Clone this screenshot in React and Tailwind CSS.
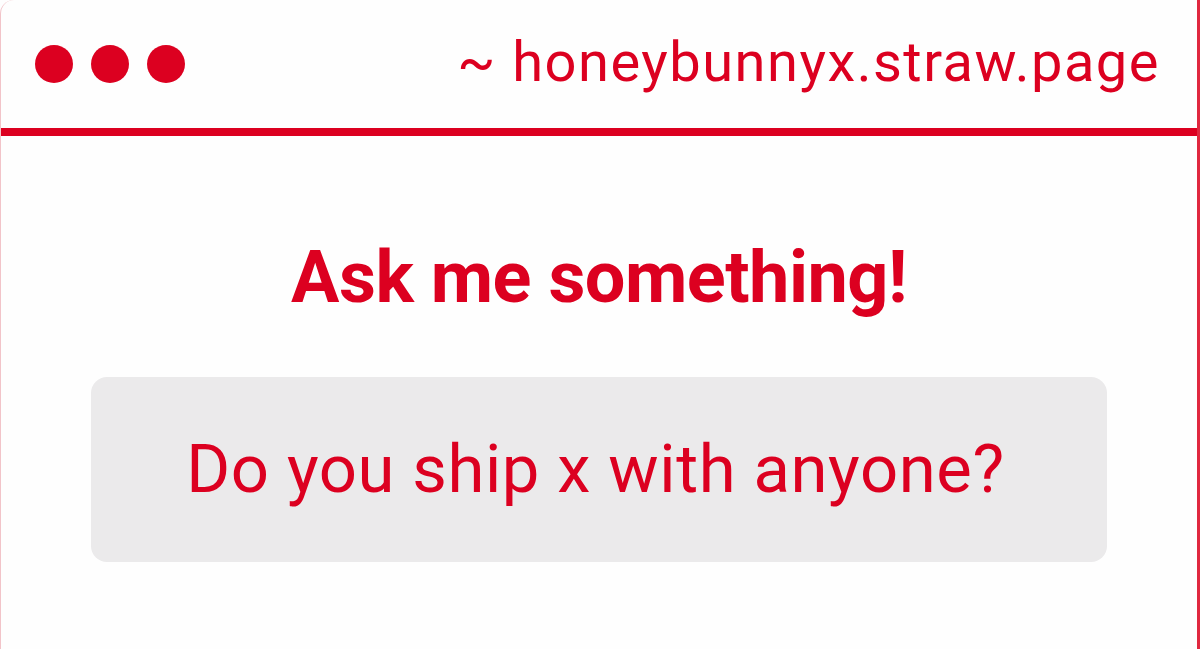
export default function App() {
  return (
    <div className="h-[649px] w-full overflow-hidden bg-[#fefefe] font-['Roboto',sans-serif] text-[#dc0020]">
      <div className="flex h-[680px] flex-col rounded-tl-[14px] border-l border-r-[3px] border-l-[#f2c4c9] border-r-[#e0283f] bg-[#fefefe]">
        <div className="flex h-[128px] items-center justify-between pl-[34px] pr-[37px]">
          <div className="flex items-center gap-[18px]">
            <span className="h-[38px] w-[38px] rounded-full bg-[#dc0020]" />
            <span className="h-[38px] w-[38px] rounded-full bg-[#dc0020]" />
            <span className="h-[38px] w-[38px] rounded-full bg-[#dc0020]" />
          </div>
          <div className="pb-[4px] text-[56px] leading-none tracking-[1.5px]">~ honeybunnyx.straw.page</div>
        </div>
        <div className="h-[8px] bg-[#dc0020]" />
        <div className="flex flex-col items-center pt-[101px]">
          <h1 className="text-[72px] font-bold leading-[82px] tracking-[-0.5px]">Ask me something!</h1>
          <div className="mt-[58px] flex h-[185px] w-[1016px] items-center justify-center rounded-[16px] bg-[#ebeaeb]">
            <span className="pr-[7px] text-[67px] leading-none tracking-[0.6px]">Do you ship x with anyone?</span>
          </div>
        </div>
      </div>
    </div>
  );
}
